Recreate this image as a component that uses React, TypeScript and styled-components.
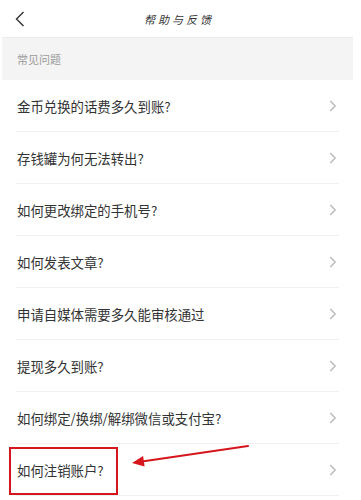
import React from 'react';
import styled, { createGlobalStyle } from 'styled-components';

const GlobalStyle = createGlobalStyle`
  html, body {
    margin: 0;
    padding: 0;
    background: #fff;
  }
  body {
    font-family: "Noto Sans CJK SC", "Noto Sans", sans-serif;
    -webkit-font-smoothing: antialiased;
  }
`;

const Screen = styled.div`
  position: relative;
  width: 361px;
  height: 500px;
  overflow: hidden;
  background: #fff;
`;

const Page = styled.div`
  width: 351px;
  margin-left: 2px;
  display: flex;
  flex-direction: column;
`;

const TopBar = styled.div`
  height: 37px;
  display: grid;
  grid-template-columns: 1fr auto 1fr;
  align-items: center;
`;

const BackButton = styled.button`
  justify-self: start;
  border: none;
  background: transparent;
  padding: 0 0 0 13px;
  display: flex;
  align-items: center;
  cursor: pointer;
`;

const Title = styled.h1`
  margin: 0;
  font-family: "Noto Sans CJK SC", sans-serif;
  font-weight: 400;
  font-size: 11px;
  letter-spacing: 3px;
  margin-right: -3px;
  color: #333;
  font-style: italic;
`;

const SectionHeader = styled.div`
  height: 42px;
  background: #f4f4f4;
  border-top: 1px solid #ececec;
  display: flex;
  align-items: center;
  padding-left: 15px;
  font-size: 11px;
  color: #9a9a9a;
`;

const List = styled.ul`
  list-style: none;
  margin: 0;
  padding: 0 14px;
`;

const Row = styled.li`
  height: 51px;
  border-bottom: 1px solid #efefef;
  display: flex;
  align-items: center;
  justify-content: space-between;
  padding: 0 2px 0 1px;
  font-size: 13.4px;
  color: #333;
`;

const Chevron = styled.svg`
  flex: none;
`;

const Highlight = styled.div`
  position: absolute;
  left: 9px;
  top: 447px;
  width: 105px;
  height: 44px;
  border: 2px solid #d6161d;
`;

const ArrowLayer = styled.svg`
  position: absolute;
  left: 0;
  top: 0;
  pointer-events: none;
`;

const questions = [
  '金币兑换的话费多久到账?',
  '存钱罐为何无法转出?',
  '如何更改绑定的手机号?',
  '如何发表文章?',
  '申请自媒体需要多久能审核通过',
  '提现多久到账?',
  '如何绑定/换绑/解绑微信或支付宝?',
  '如何注销账户?',
];

const App = () => {
  return (
    <Screen>
      <GlobalStyle />
      <Page>
        <TopBar>
          <BackButton aria-label="返回">
            <svg width="10" height="16" viewBox="0 0 10 16">
              <path d="M8.5 1 L1.5 8 L8.5 15" fill="none" stroke="#333" strokeWidth="1.4" />
            </svg>
          </BackButton>
          <Title>帮助与反馈</Title>
          <span />
        </TopBar>
        <SectionHeader>常见问题</SectionHeader>
        <List>
          {questions.map((q) => (
            <Row key={q}>
              <span>{q}</span>
              <Chevron width="8" height="12" viewBox="0 0 8 12">
                <path d="M1.2 1 L6.2 6 L1.2 11" fill="none" stroke="#b8b8b8" strokeWidth="1.3" />
              </Chevron>
            </Row>
          ))}
        </List>
      </Page>
      <Highlight />
      <ArrowLayer width="361" height="500" viewBox="0 0 361 500">
        <line x1="248" y1="446" x2="142" y2="461.5" stroke="#d6161d" strokeWidth="2.2" strokeLinecap="round" />
        <polygon points="132,463 144.6,466.6 143.1,455.9" fill="#d6161d" />
      </ArrowLayer>
    </Screen>
  );
};

export default App;
